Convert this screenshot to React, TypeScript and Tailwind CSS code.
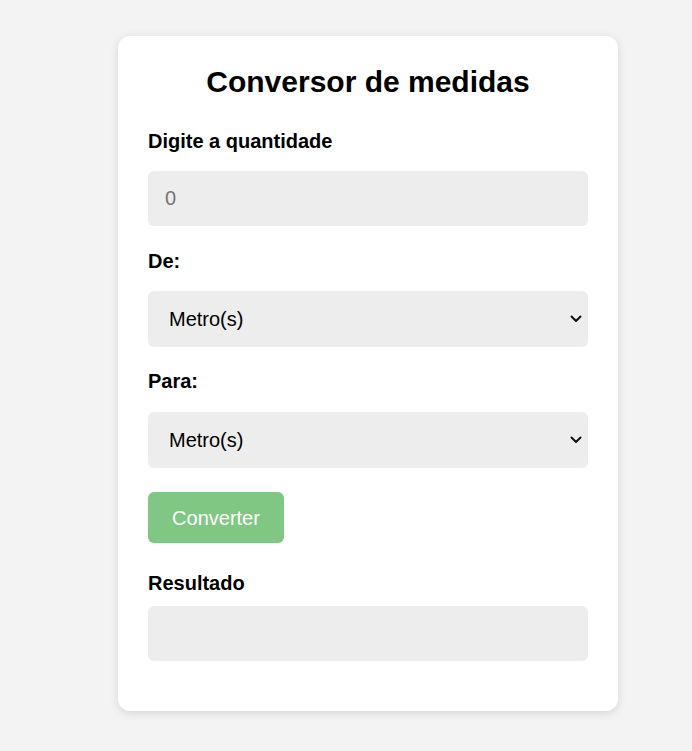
import React, { useState } from "react";

const units = ["Metro(s)", "Centímetro(s)", "Milímetro(s)", "Quilômetro(s)"];

const Chevron = () => (
  <svg
    className="pointer-events-none absolute right-[6px] top-1/2 -translate-y-1/2"
    width="12"
    height="8"
    viewBox="0 0 12 8"
    fill="none"
  >
    <path d="M1.5 1.5 6 6l4.5-4.5" stroke="#111" strokeWidth="2" strokeLinecap="round" strokeLinejoin="round" />
  </svg>
);

const UnitSelect = ({ value, onChange }: { value: string; onChange: (v: string) => void }) => (
  <div className="relative w-full">
    <select
      value={value}
      onChange={(e) => onChange(e.target.value)}
      className="w-full h-[56px] appearance-none rounded-[6px] bg-[#ededed] pl-[21px] pr-8 text-[20px] text-black outline-none cursor-pointer"
    >
      {units.map((u) => (
        <option key={u} value={u}>
          {u}
        </option>
      ))}
    </select>
    <Chevron />
  </div>
);

const App = () => {
  const [amount, setAmount] = useState("");
  const [from, setFrom] = useState(units[0]);
  const [to, setTo] = useState(units[0]);

  return (
    <div className="min-h-[751px] w-full bg-[#f3f3f3] pt-[36px] font-['Liberation_Sans',Arial,sans-serif]">
      <div className="ml-[118px] w-[500px] rounded-[12px] bg-white px-[30px] pt-[29px] pb-[50px] shadow-[0_2px_10px_rgba(0,0,0,0.12)]">
        {/* Title */}
        <h2 className="text-center text-[30px] font-bold leading-[34px] text-black">
          Conversor de medidas
        </h2>

        <label className="mt-[31px] block text-[20px] font-bold leading-[23px] text-black">
          Digite a quantidade
        </label>
        <input
          type="number"
          placeholder="0"
          value={amount}
          onChange={(e) => setAmount(e.target.value)}
          className="mt-[18px] block h-[55px] w-full rounded-[6px] bg-[#ededed] px-[17px] text-[20px] text-black outline-none placeholder:text-[#757575]"
        />

        <label className="mt-[24px] block text-[20px] font-bold leading-[23px] text-black">De:</label>
        <div className="mt-[18px]">
          <UnitSelect value={from} onChange={setFrom} />
        </div>

        <label className="mt-[23px] block text-[20px] font-bold leading-[23px] text-black">Para:</label>
        <div className="mt-[19px]">
          <UnitSelect value={to} onChange={setTo} />
        </div>

        <button className="mt-[24px] block h-[51px] w-[136px] rounded-[6px] bg-[#81c784] text-[20px] text-white cursor-pointer">
          Converter
        </button>

        <label className="mt-[29px] block text-[20px] font-bold leading-[23px] text-black">Resultado</label>
        <div className="mt-[11px] h-[55px] w-full rounded-[6px] bg-[#ededed]" />
      </div>
    </div>
  );
};

export default App;
